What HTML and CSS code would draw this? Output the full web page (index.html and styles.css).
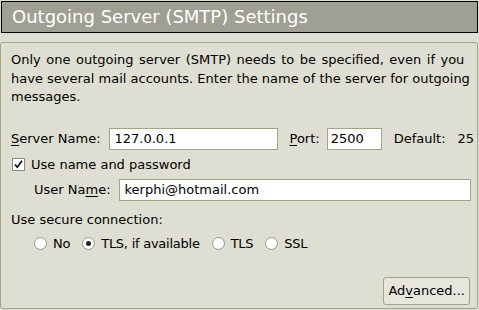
FILE: index.html
```html
<!DOCTYPE html>
<html>
<head>
<meta charset="utf-8">
<link rel="stylesheet" href="styles.css">
</head>
<body>
<div class="dialog">
  <div class="header">Outgoing Server (SMTP) Settings</div>
  <div class="panel">
    <p class="intro"><span class="line line-1">Only one outgoing server (SMTP) needs to be specified, even if you</span> <span class="line line-2">have several mail accounts. Enter the name of the server for outgoing</span> <span class="line">messages.</span></p>
    <div class="row server-row">
      <span class="label"><u>S</u>erver Name:</span>
      <span class="input server-input">127.0.0.1</span>
      <span class="label port-label"><u>P</u>ort:</span>
      <span class="input port-input">2500</span>
      <span class="label default-label">Default:</span>
      <span class="label">25</span>
    </div>
    <div class="row check-row">
      <span class="checkbox"><svg width="11" height="11" viewBox="0 0 11 11"><path d="M2 5.5 L4.3 8.2 L9 1.8" fill="none" stroke="#000" stroke-width="1.6"/></svg></span>
      <span class="label">Use name and password</span>
    </div>
    <div class="row user-row">
      <span class="label">User Na<u>m</u>e:</span>
      <span class="input user-input">kerphi@hotmail.com</span>
    </div>
    <div class="secure-label">Use secure connection:</div>
    <div class="row radio-row">
      <span class="radio"></span><span class="label">No</span>
      <span class="radio checked"></span><span class="label">TLS, if available</span>
      <span class="radio"></span><span class="label">TLS</span>
      <span class="radio"></span><span class="label">SSL</span>
    </div>
    <div class="button-row">
      <span class="button">Ad<u>v</u>anced...</span>
    </div>
  </div>
</div>
</body>
</html>
```
FILE: styles.css
```css
html, body {
  margin: 0;
  padding: 0;
  background: #deded2;
  width: 479px;
  height: 310px;
  overflow: hidden;
}
.dialog {
  font-family: "DejaVu Sans", sans-serif;
  font-size: 13px;
  color: #000;
  display: flex;
  flex-direction: column;
  padding: 1px 1px 0 0;
}
.header {
  margin-left: 1px;
  height: 30px;
  border: 1px solid #000;
  background: #9f9f93;
  color: #fff;
  font-size: 18px;
  line-height: 30px;
  padding-left: 10px;
  box-sizing: content-box;
  width: 465px;
}
.panel {
  margin-top: 9px;
  width: 478px;
  height: 267px;
  border: 1px solid #a3a386;
  border-radius: 3px;
  padding: 0 0 0 10px;
  box-sizing: border-box;
  display: flex;
  flex-direction: column;
}
.intro {
  margin: 8px 0 0 0;
  line-height: 18.5px;
  white-space: nowrap;
}
.line {
  display: block;
}
.line-1 {
  word-spacing: 1.35px;
}
.row {
  display: flex;
  align-items: center;
}
.server-row {
  margin-top: 21px;
  height: 22px;
}
.input {
  background: #fff;
  border: 1px solid #a3a386;
  height: 20px;
  line-height: 20px;
  padding-left: 5px;
  box-sizing: content-box;
}
.server-input {
  margin-left: 8px;
  width: 162px;
}
.port-label {
  margin-left: 12px;
}
.port-input {
  margin-left: 7px;
  width: 50px;
  padding-left: 3px;
}
.default-label {
  margin-left: 12px;
  margin-right: 12px;
}
.check-row {
  margin-top: 7px;
  height: 15px;
}
.checkbox {
  width: 11px;
  height: 11px;
  border: 1px solid #8a8a78;
  background: #fff;
  margin-left: 1px;
  margin-right: 6px;
  display: flex;
}
.user-row {
  margin-top: 7px;
  margin-left: 23px;
  height: 22px;
}
.user-input {
  margin-left: 8px;
  width: 345px;
}
.secure-label {
  margin-top: 11px;
  line-height: 16px;
}
.radio-row {
  margin-top: 9px;
  margin-left: 23px;
  height: 14px;
}
.radio {
  width: 11px;
  height: 11px;
  border-radius: 50%;
  border: 1px solid #9a9a88;
  background: radial-gradient(circle at 40% 40%, #fff 55%, #e4e4dc 100%);
  margin-right: 6px;
  display: inline-block;
  position: relative;
}
.radio.checked::after {
  content: "";
  position: absolute;
  left: 3px;
  top: 3px;
  width: 5px;
  height: 5px;
  border-radius: 50%;
  background: #222;
}
.radio-row .label {
  margin-right: 12px;
  letter-spacing: -0.25px;
}
.button-row {
  margin-top: auto;
  margin-bottom: 3px;
  display: flex;
  justify-content: flex-end;
  padding-right: 7px;
}
.button {
  border: 1px solid #a3a386;
  border-radius: 3px;
  padding: 0 4px;
  height: 26px;
  line-height: 26px;
  background: #e6e6dc;
}
u {
  text-decoration: underline;
  text-underline-offset: 2px;
}
```
